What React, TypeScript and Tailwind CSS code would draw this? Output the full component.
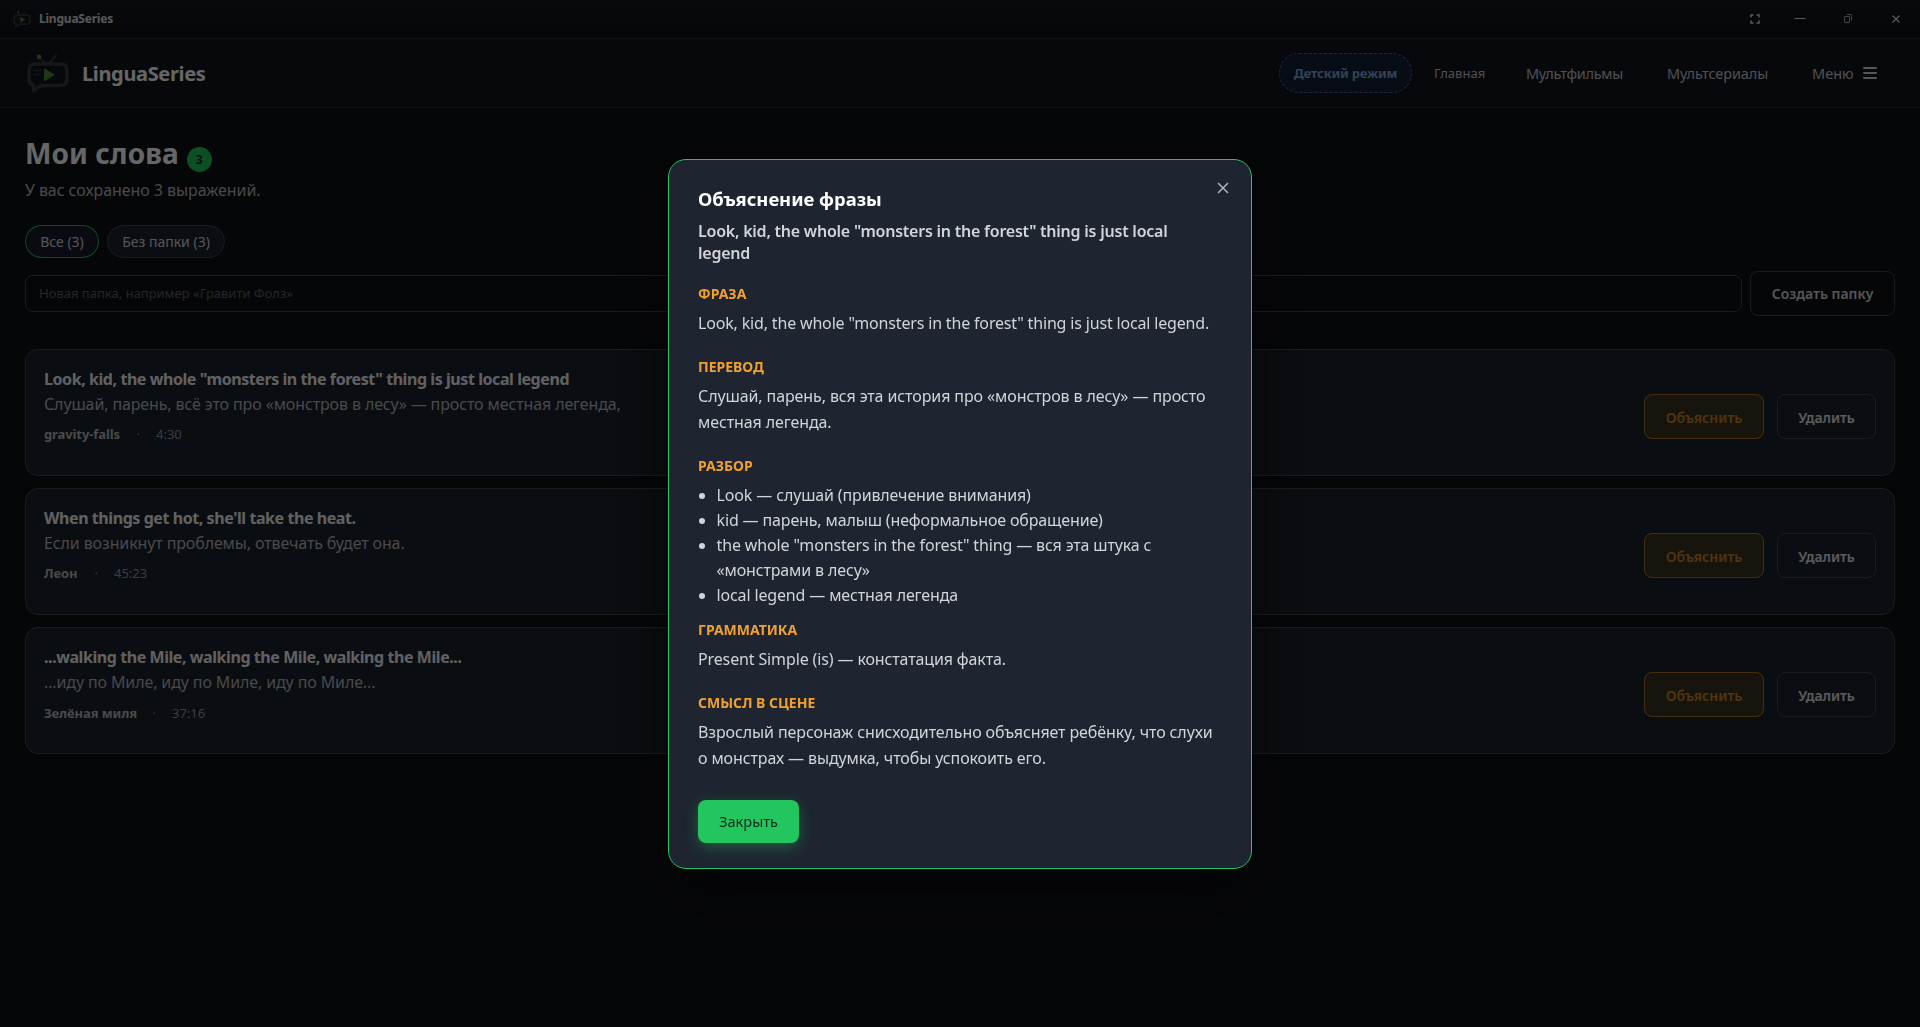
import type { ReactNode } from 'react';

const font = "font-['Noto_Sans','Open_Sans',sans-serif]";

function Logo({ className }: { className: string }) {
  return (
    <svg viewBox="0 0 42 38" className={className} fill="none">
      <path
        d="M8.500 10H33.500Q40 10 40 16.500V25Q40 31.500 33.500 31.500H14L6.500 36.500V31Q2 29.500 2 25V16.500Q2 10 8.500 10Z"
        stroke="#363d3f"
        strokeWidth="3.600"
        strokeLinejoin="round"
      />
      <path d="M12.500 3.500L18.500 9.500M29 1.500L22 9.500" stroke="#363d3f" strokeWidth="2" strokeLinecap="round" />
      <path d="M15 10Q20 5.500 26 10Z" fill="#363d3f" />
      <circle cx="12" cy="2.800" r="2.300" fill="#4f9340" />
      <path d="M6.500 16.500H14M6.500 20.500H13" stroke="#2f3743" strokeWidth="1.300" />
      <path d="M17.500 15L27.500 20.800L17.500 26.600Z" fill="#4c8c33" stroke="#4c8c33" strokeWidth="1" strokeLinejoin="round" />
    </svg>
  );
}

function TitleBar() {
  return (
    <div className="flex h-[39px] items-center justify-between border-b border-[#262a30] bg-gradient-to-b from-[#151923] to-[#0c1016] pl-[13px] pr-[18px]">
      <div className="flex items-center">
        <Logo className="h-[16px] w-[18px]" />
        <span className="ml-[8px] text-[12px] font-bold tracking-[-0.22px] text-[#dcdcdc]">LinguaSeries</span>
      </div>
      <div className="flex items-center text-[#dfe1e5]">
        <svg viewBox="0 0 12 12" className="mr-[33px] h-[12px] w-[12px]" fill="none" stroke="currentColor" strokeWidth="1.500">
          <path d="M2 4.500V2H4.500M7.500 2H10V4.500M10 7.500V10H7.500M4.500 10H2V7.500" />
        </svg>
        <svg viewBox="0 0 12 12" className="mr-[36px] h-[12px] w-[12px]" fill="none" stroke="currentColor">
          <path d="M0.500 5.500H11.500" />
        </svg>
        <svg viewBox="0 0 12 12" className="mr-[36px] h-[12px] w-[12px]" fill="none" stroke="#a3a7ae">
          <path d="M2.500 4Q2.500 3.500 3 3.500H7Q7.500 3.500 7.500 4V9Q7.500 9.500 7 9.500H3Q2.500 9.500 2.500 9ZM4.500 1.500H9Q9.500 1.500 9.500 2V7.500" />
        </svg>
        <svg viewBox="0 0 12 12" className="h-[12px] w-[12px]" fill="none" stroke="currentColor" strokeWidth="1.200">
          <path d="M2.500 2.500L9.500 9.500M9.500 2.500L2.500 9.500" />
        </svg>
      </div>
    </div>
  );
}

function Header() {
  return (
    <header className="flex h-[69px] items-center justify-between border-b border-[#262a30] bg-[#13151c] pl-[27px] pr-[43px]">
      <div className="flex items-center">
        <Logo className="h-[38px] w-[42px]" />
        <span className="ml-[13px] pt-[2px] text-[20px] font-bold tracking-[-0.35px] text-white">LinguaSeries</span>
      </div>
      <nav className="flex items-center whitespace-nowrap text-[14.5px] text-[#c4c7cd]">
        <span className="flex h-[40px] w-[133px] items-center justify-center rounded-full border border-dashed border-[#3c68a6] bg-[#122036] pt-[1px] text-[13px] font-bold tracking-[-0.2px] text-[#7aa5dc]">
          Детский режим
        </span>
        <span className="ml-[22px] w-[52px] pt-[1px] text-[13px]">Главная</span>
        <span className="ml-[40px] w-[98px] pt-[2px] tracking-[-0.3px]">Мультфильмы</span>
        <span className="ml-[43px] w-[102px] pt-[2px] tracking-[-0.1px]">Мультсериалы</span>
        <span className="ml-[43px] w-[42px] pt-[2px]">Меню</span>
        <span className="ml-[9px] flex flex-col gap-[3px]">
          <i className="h-[2px] w-[14px] rounded bg-[#d5d7db]" />
          <i className="h-[2px] w-[14px] rounded bg-[#d5d7db]" />
          <i className="h-[2px] w-[14px] rounded bg-[#d5d7db]" />
        </span>
      </nav>
    </header>
  );
}

type Word = { phrase: string; translation: string; source: string; time: string; sourceWidth: string };

const words: Word[] = [
  {
    phrase: 'Look, kid, the whole "monsters in the forest" thing is just local legend',
    translation: 'Слушай, парень, всё это про «монстров в лесу» — просто местная легенда,',
    source: 'gravity-falls',
    time: '4:30',
    sourceWidth: 'w-[77px]',
  },
  {
    phrase: "When things get hot, she'll take the heat.",
    translation: 'Если возникнут проблемы, отвечать будет она.',
    source: 'Леон',
    time: '45:23',
    sourceWidth: 'w-[35px]',
  },
  {
    phrase: '...walking the Mile, walking the Mile, walking the Mile...',
    translation: '...иду по Миле, иду по Миле, иду по Миле...',
    source: 'Зелёная миля',
    time: '37:16',
    sourceWidth: 'w-[93px]',
  },
];

function WordCard({ word }: { word: Word }) {
  return (
    <article className="flex h-[126.6px] justify-between rounded-[13px] border border-[#43474f] bg-[#1a212b] pl-[18px] pr-[18px]">
      <div className="whitespace-nowrap pt-[16.8px]">
        <h3 className="text-[16px] leading-[25px] font-bold tracking-[-0.43px] text-[#f2f2f2]">{word.phrase}</h3>
        <p className="text-[16px] leading-[25px] tracking-[-0.12px] text-[#b5b7bb]">{word.translation}</p>
        <div className="mt-[7.5px] flex text-[13px] leading-[20px]">
          <span className={`${word.sourceWidth} font-bold tracking-[-0.1px] text-[#b5b7bb]`}>{word.source}</span>
          <span className="ml-[15.500px] w-[4px] text-[#80848c]">·</span>
          <span className="ml-[15.500px] text-[#94979e]">{word.time}</span>
        </div>
      </div>
      <div className="flex items-center gap-[13px] self-start pt-[44px]">
        <button className="h-[45px] w-[120px] rounded-[8px] border border-[#b07320] bg-[#3b3325] pt-[1px] text-[14px] font-semibold text-[#cc8226]">
          Объяснить
        </button>
        <button className="h-[45px] w-[99px] rounded-[8px] border border-[#43474f] pt-[1px] text-[14px] font-semibold tracking-[-0.1px] text-[#e2e3e5]">
          Удалить
        </button>
      </div>
    </article>
  );
}

function Section({ title, children, last = false }: { title: string; children: ReactNode; last?: boolean }) {
  return (
    <section className={last ? '' : 'mb-[21px]'}>
      <h4 className="text-[14px] leading-[20px] font-bold text-[#f0a030]">{title}</h4>
      <p className="mt-[6px] text-[16px] leading-[26px] tracking-[-0.13px]">{children}</p>
    </section>
  );
}

function ExplainDialog() {
  return (
    <div className="fixed inset-0 flex items-center justify-center bg-black/60">
      <div className="relative h-[710px] w-[584px] rounded-[18px] border border-[#22c55e] bg-[#1e2530] px-[29px] pt-[25px] text-[#d2d4d8] shadow-[0_20px_60px_rgba(0,0,0,0.5)]">
        <svg viewBox="0 0 12 12" className="absolute top-[22px] right-[22px] h-[12px] w-[12px]" fill="none" stroke="#aab0ba" strokeWidth="1.600">
          <path d="M1 1L11 11M11 1L1 11" />
        </svg>
        <h2 className="text-[18.4px] leading-[28px] font-bold text-white">Объяснение фразы</h2>
        <p className="mt-[7px] mb-[20px] whitespace-nowrap text-[16px] leading-[22px] font-semibold tracking-[-0.23px]">
          Look, kid, the whole "monsters in the forest" thing is just local
          <br />
          legend
        </p>
        <div className="whitespace-nowrap">
          <Section title="ФРАЗА">
            <span className="tracking-[-0.17px]">Look, kid, the whole "monsters in the forest" thing is just local legend.</span>
          </Section>
          <Section title="ПЕРЕВОД">
            <span className="tracking-[-0.1px]">
              Слушай, парень, вся эта история про «монстров в лесу» — просто
              <br />
              местная легенда.
            </span>
          </Section>
          <section className="mb-[12px]">
            <h4 className="text-[14px] leading-[20px] font-bold text-[#f0a030]">РАЗБОР</h4>
            <ul className="mt-[7px] list-disc pl-[18.500px] text-[16px] leading-[25px] tracking-[-0.14px]">
              <li>Look — слушай (привлечение внимания)</li>
              <li>kid — парень, малыш (неформальное обращение)</li>
              <li>
                the whole "monsters in the forest" thing — вся эта штука с
                <br />
                «монстрами в лесу»
              </li>
              <li>local legend — местная легенда</li>
            </ul>
          </section>
          <Section title="ГРАММАТИКА">Present Simple (is) — констатация факта.</Section>
          <Section title="СМЫСЛ В СЦЕНЕ" last>
            <span className="tracking-[-0.11px]">
              Взрослый персонаж снисходительно объясняет ребёнку, что слухи
              <br />о монстрах — выдумка, чтобы успокоить его.
            </span>
          </Section>
        </div>
        <button className="mt-[29px] h-[43px] w-[101px] rounded-[8px] bg-[#22c55e] pt-[1px] text-[14.5px] text-[#0d2a1a] shadow-[0_4px_14px_rgba(34,197,94,0.35)]">
          Закрыть
        </button>
      </div>
    </div>
  );
}

export default function App() {
  return (
    <div className={`${font} h-[1027px] overflow-hidden bg-[#0e1014]`}>
      <TitleBar />
      <Header />
      <main className="px-[25px] pt-[26px]">
        <div className="flex items-end gap-[8px]">
          <h1 className="text-[28px] leading-[38px] font-bold tracking-[0.1px] text-white">Мои слова</h1>
          <span className="flex h-[25px] w-[25px] items-center justify-center rounded-full bg-[#22c55e] text-[12px] font-bold text-[#0d2a1a]">
            3
          </span>
        </div>
        <p className="mt-[6px] text-[16px] leading-[24px] tracking-[-0.06px] text-[#b5b7bb]">У вас сохранено 3 выражений.</p>
        <div className="mt-[23px] flex gap-[8px] text-[14px] text-[#d5d7db]">
          <span className="flex h-[33px] w-[74px] items-center justify-center rounded-full border border-[#22c55e]/90 bg-[#1a1d2f]">Все (3)</span>
          <span className="flex h-[33px] w-[118px] items-center justify-center rounded-full border border-[#43474f] bg-[#1a212b]">
            Без папки (3)
          </span>
        </div>
        <div className="mt-[13px] flex items-center gap-[8px]">
          <div className="flex h-[37px] flex-1 items-center rounded-[8px] border border-[#43474f] pt-[1px] pl-[13px] text-[13px] text-[#5d6066]">
            Новая папка, например «Гравити Фолз»
          </div>
          <button className="h-[45px] w-[145px] rounded-[8px] border border-[#43474f] text-[14px] font-semibold text-[#d5d7db]">
            Создать папку
          </button>
        </div>
        <div className="mt-[33px] flex flex-col gap-[12.6px]">
          {words.map((w) => (
            <WordCard key={w.phrase} word={w} />
          ))}
        </div>
      </main>
      <ExplainDialog />
    </div>
  );
}
